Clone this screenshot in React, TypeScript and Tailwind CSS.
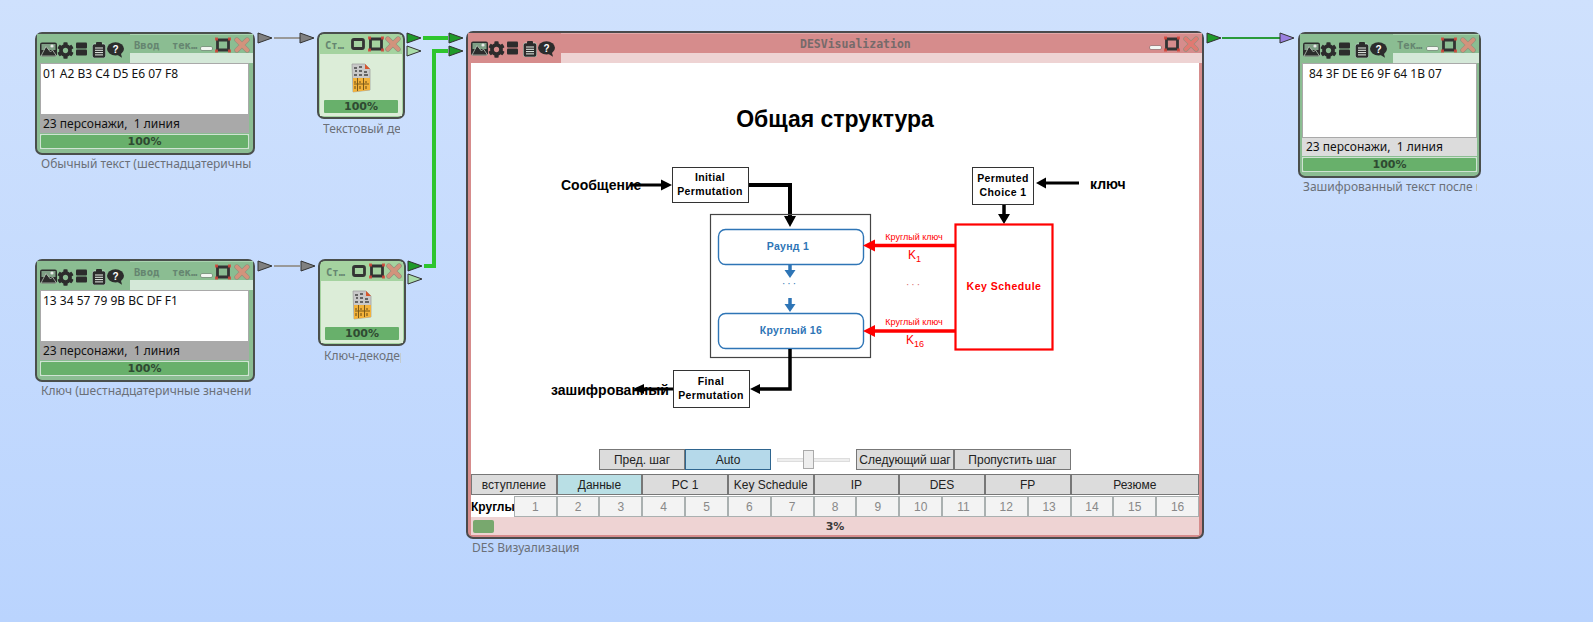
import React from "react";
import { FaCog } from "react-icons/fa";

const Tri = ({ x, cy, fill, w = 14, h = 10 }: { x: number; cy: number; fill: string; w?: number; h?: number }) => (
  <polygon points={`${x},${cy - h / 2} ${x + w},${cy} ${x},${cy + h / 2}`} fill={fill} stroke="#333" strokeWidth="1" />
);

const ImageIcon = () => (
  <svg width="17" height="15" viewBox="0 0 17 15" className="shrink-0">
    <rect x="0" y="0.5" width="17" height="14" rx="2" fill="#2c2c2c" />
    <rect x="1.5" y="2" width="14" height="6" fill="#7f9f85" />
    <circle cx="12" cy="4" r="1.6" fill="#e8e8e8" />
    <path d="M1 14 L6 4.5 L10.5 10 L12.5 8 L16.5 14 Z" fill="#2c2c2c" stroke="#c8d8c8" strokeWidth="0.7" />
  </svg>
);
const StackIcon = () => (
  <svg width="11" height="14" viewBox="0 0 11 14" className="shrink-0">
    <rect x="0" y="0.5" width="11" height="6" rx="1" fill="#2c2c2c" />
    <rect x="0" y="7.5" width="11" height="6" rx="1" fill="#2c2c2c" />
  </svg>
);
const ClipIcon = () => (
  <svg width="14" height="16" viewBox="0 0 14 16" className="shrink-0">
    <rect x="0.3" y="2" width="13.4" height="14" rx="2" fill="#2c2c2c" stroke="#dfe" strokeWidth="0.5" />
    <rect x="4" y="0" width="6" height="3.5" rx="1" fill="#2c2c2c" />
    <path d="M3 6h8M3 8.3h8M3 10.6h8M3 12.9h8" stroke="#e8efe8" strokeWidth="1" />
  </svg>
);
const BubbleIcon = () => (
  <svg width="17" height="16" viewBox="0 0 17 16" className="shrink-0">
    <ellipse cx="8.5" cy="6.8" rx="8.5" ry="6.6" fill="#2c2c2c" />
    <path d="M9 12 L15 15.8 L13.5 10 Z" fill="#2c2c2c" />
    <text x="8.5" y="10.5" textAnchor="middle" fontSize="10" fontWeight="700" fill="#fff" fontFamily="'Liberation Sans', sans-serif">?</text>
  </svg>
);
const Toolbar = () => (
  <div className="flex items-start pl-[3px] pt-[8px] text-[#2c2c2c]">
    <ImageIcon />
    <FaCog size={17} className="shrink-0" />
    <div className="ml-[2px]">
      <StackIcon />
    </div>
    <div className="ml-[5px]">
      <ClipIcon />
    </div>
    <div className="ml-[1px]">
      <BubbleIcon />
    </div>
  </div>
);

const MinIcon = () => <div className="mt-[10px] h-[3px] w-[11px] shrink-0 rounded-[1px] bg-[#f2f6f2] shadow-[0_0_0_0.5px_#777]" />;
const StopIcon = () => (
  <svg width="14" height="16" viewBox="0 0 14 16" className="shrink-0">
    <rect x="1.5" y="3.5" width="11" height="9" rx="1.5" fill="none" stroke="#333" strokeWidth="2.8" />
  </svg>
);
const ExpandIcon = () => (
  <svg width="16" height="16" viewBox="0 0 16 16" className="shrink-0">
    <path d="M2.5 3 H13.5 V13 H2.5 Z" fill="none" stroke="#333" strokeWidth="2.8" />
    <rect x="0" y="0.5" width="3" height="3" fill="#d6453a" opacity="0.85" />
    <rect x="13" y="0.5" width="3" height="3" fill="#d6453a" opacity="0.85" />
    <rect x="0" y="12.5" width="3" height="3" fill="#d6453a" opacity="0.85" />
    <rect x="13" y="12.5" width="3" height="3" fill="#d6453a" opacity="0.85" />
  </svg>
);
const CloseIcon = ({ color }: { color: string }) => (
  <svg width="16" height="16" viewBox="0 0 16 16" className="shrink-0">
    <path d="M2.8 2.8 L13.2 13.2 M13.2 2.8 L2.8 13.2" stroke="#8f8f7c" strokeWidth="5" strokeLinecap="round" />
    <path d="M2.8 2.8 L13.2 13.2 M13.2 2.8 L2.8 13.2" stroke={color} strokeWidth="3.8" strokeLinecap="round" />
  </svg>
);

const FileIcon = () => (
  <svg width="20" height="30" viewBox="0 0 20 30">
    <path d="M1 1 L14 1 L19 6 L19 27 L2 29 Z" fill="#c9c9c9" stroke="#9a9a9a" strokeWidth="0.7" />
    <path d="M14 1 L19 6 L14 6 Z" fill="#d9572b" />
    <path d="M2 15 L19 15 L19 27 L2 29 Z" fill="#f3b23a" />
    <path d="M3 5h3M8 4h3M4 8h2M8 8h3M13 9h3M3 12h3M8 12h3M13 12h4" stroke="#444" strokeWidth="1.3" />
    <path d="M6.5 15v13M12.5 15v12M3 21h15" stroke="#7a5a1a" strokeWidth="1" />
    <path d="M4 18v2M9 18v2M15 18v2M4 23v3M9 23v3M15 23v3" stroke="#6a4a10" strokeWidth="1" />
  </svg>
);

const Progress = () => (
  <div className="flex h-[13px] items-center justify-center rounded-[1px] bg-[#68b06b] font-['DejaVu_Sans',sans-serif] text-[11px] font-bold leading-none text-[#2f4a32]">
    100%
  </div>
);

const Label = ({ text, className }: { text: string; className: string }) => (
  <div className={`overflow-hidden whitespace-nowrap font-['Noto_Sans',sans-serif] text-[12px] leading-[16px] text-[#6b7078] ${className}`}>{text}</div>
);

const titleCls = "whitespace-pre pl-[4px] pt-[2px] font-['DejaVu_Sans_Mono',monospace] text-[10.5px] font-bold leading-[16px] text-[#658570]";

const InputNode = ({
  title,
  value,
  areaH,
  statusBg,
  bodyPad,
  valuePad,
  statusPad,
}: {
  title: string;
  value: string;
  areaH: string;
  statusBg: string;
  bodyPad: string;
  valuePad: string;
  statusPad: string;
}) => (
  <div className="flex flex-col rounded-[7px] border-2 border-[#4a4f4c] bg-[#8bbd92] pb-[4px]">
    <div className="flex h-[29px]">
      <div className="w-[93px] shrink-0 rounded-br-[14px] bg-[#8bbd92]">
        <Toolbar />
      </div>
      <div className="flex min-w-0 flex-1 flex-col">
        <div className="flex h-[19px] items-start justify-between border-t border-[#a9d3af] bg-[#8bbd92] pr-[3px]">
          <span className={titleCls}>{title}</span>
          <div className="flex gap-[3px] pt-[2px]">
            <MinIcon />
            <ExpandIcon />
            <CloseIcon color="#d2937c" />
          </div>
        </div>
        <div className="flex-1 bg-[#d4e8d8]" />
      </div>
    </div>
    <div className={`flex flex-col ${bodyPad}`}>
      <div className={`${areaH} border border-[#a9a9a9] bg-white ${valuePad} font-['Noto_Sans',sans-serif] text-[12px] leading-[20px] text-[#111]`}>{value}</div>
      <div className={`h-[18px] ${statusBg} ${statusPad} font-['Noto_Sans',sans-serif] text-[12px] leading-[18px] text-[#111]`}>23 персонажи,&nbsp; 1 линия</div>
      <div className="mt-[1px] bg-[#cfe3d2] p-[1px]">
        <Progress />
      </div>
    </div>
  </div>
);

const SmallNode = ({ pos, label }: { pos: string; label: string }) => (
  <div className={`absolute w-[88px] ${pos}`}>
    <div className="rounded-[7px] border-2 border-[#4a4f4c] bg-[#a5d3a0] p-[1px]">
      <div className="flex h-[19px] items-start justify-between bg-[#a5d3a0] pl-[5px] pr-[1px] pt-[1px]">
        <span className="pt-[1px] font-['DejaVu_Sans_Mono',monospace] text-[10.5px] font-bold leading-[16px] text-[#658570]">Ст…</span>
        <div className="flex gap-[1px]">
          <div className="mr-[2px]">
            <StopIcon />
          </div>
          <ExpandIcon />
          <CloseIcon color="#d2937c" />
        </div>
      </div>
      <div className="flex h-[62px] flex-col bg-[#dcedd8] px-[4px] pb-[3px]">
        <div className="flex flex-1 items-center justify-center pt-[2px]">
          <FileIcon />
        </div>
        <Progress />
      </div>
    </div>
    <Label text={label} className="ml-[6px] mt-[2px] w-[77px]" />
  </div>
);

const Arrow = ({ d, head, color = "#000", w = 3 }: { d: string; head: string; color?: string; w?: number }) => (
  <g>
    <path d={d} fill="none" stroke={color} strokeWidth={w} />
    <polygon points={head} fill={color} />
  </g>
);

const diagramFont = "'Liberation Sans', Arial, sans-serif";

const Diagram = () => (
  <svg width="728" height="386" viewBox="471 63 728 386" className="block">
    <g fontFamily={diagramFont}>
      <text x="835" y="127" textAnchor="middle" fontSize="23" fontWeight="700" fill="#000">Общая структура</text>

      <text x="561" y="190" fontSize="14" fontWeight="700" fill="#000">Сообщение</text>
      <Arrow d="M630 185 H664" head="672,185 661,179.5 661,190.5" />
      <rect x="672.5" y="167.5" width="76" height="35" fill="#fff" stroke="#333" strokeWidth="1" />
      <text x="710" y="181" textAnchor="middle" fontSize="10.5" fontWeight="700" letterSpacing="0.4">Initial</text>
      <text x="710" y="195" textAnchor="middle" fontSize="10.5" fontWeight="700" letterSpacing="0.4">Permutation</text>
      <Arrow d="M749 185 H790 V218" head="790,227 784,216 796,216" w={4} />

      <rect x="710.5" y="214.5" width="160" height="143" fill="none" stroke="#444" strokeWidth="1.2" />
      <rect x="718.5" y="229.5" width="145" height="35" rx="7" fill="#fff" stroke="#2e75b6" strokeWidth="1.4" />
      <text x="788" y="250" textAnchor="middle" fontSize="10.5" fontWeight="700" fill="#2e75b6" letterSpacing="0.3">Раунд 1</text>
      <Arrow d="M790 265 V272" head="790,278 784.5,270 795.5,270" color="#2e75b6" w={3.5} />
      <text x="790" y="287" textAnchor="middle" fontSize="10" fill="#2e75b6" letterSpacing="2">···</text>
      <Arrow d="M790 298 V306" head="790,312 784.5,304 795.5,304" color="#2e75b6" w={3.5} />
      <rect x="718.5" y="313.5" width="145" height="35" rx="7" fill="#fff" stroke="#2e75b6" strokeWidth="1.4" />
      <text x="791" y="334" textAnchor="middle" fontSize="10.5" fontWeight="700" fill="#2e75b6" letterSpacing="0.3">Круглый 16</text>

      <Arrow d="M790 349 V389 H758" head="750,389 760,384 760,394" w={3.5} />
      <rect x="673.5" y="370.5" width="76" height="37" fill="#fff" stroke="#333" strokeWidth="1" />
      <text x="711" y="385" textAnchor="middle" fontSize="10.5" fontWeight="700" letterSpacing="0.4">Final</text>
      <text x="711" y="399" textAnchor="middle" fontSize="10.5" fontWeight="700" letterSpacing="0.4">Permutation</text>
      <Arrow d="M673 389 H642" head="633,389 644,384 644,394" />
      <text x="551" y="395" fontSize="14" fontWeight="700" fill="#000">зашифрованный</text>

      <rect x="972.5" y="167.5" width="61" height="37" fill="#fff" stroke="#333" strokeWidth="1" />
      <text x="1003" y="182" textAnchor="middle" fontSize="10.5" fontWeight="700" letterSpacing="0.4">Permuted</text>
      <text x="1003" y="196" textAnchor="middle" fontSize="10.5" fontWeight="700" letterSpacing="0.4">Choice 1</text>
      <Arrow d="M1079 183 H1044" head="1036,183 1046,177.5 1046,188.5" />
      <text x="1090" y="189" fontSize="14" fontWeight="700" fill="#000">ключ</text>
      <Arrow d="M1004 205 V216" head="1004,224 998,214 1010,214" w={3.5} />

      <rect x="955.5" y="224.5" width="97" height="125" fill="#fff" stroke="#ff0000" strokeWidth="2.2" />
      <text x="1004" y="290" textAnchor="middle" fontSize="10.5" fontWeight="700" fill="#ff0000" letterSpacing="0.5">Key Schedule</text>

      <Arrow d="M955 245.5 H872" head="863,245.5 875,239.5 875,251.5" color="#ff0000" w={3.5} />
      <Arrow d="M955 331 H872" head="863,331 875,325 875,337" color="#ff0000" w={3.5} />
      <text x="914" y="240" textAnchor="middle" fontSize="9" fill="#ff0000">Круглый ключ</text>
      <text x="908" y="259" fontSize="12" fill="#ff0000">K<tspan fontSize="9" dy="3">1</tspan></text>
      <text x="914" y="288" textAnchor="middle" fontSize="10" fill="#d86a6a" letterSpacing="2">···</text>
      <text x="914" y="325" textAnchor="middle" fontSize="9" fill="#ff0000">Круглый ключ</text>
      <text x="906" y="344" fontSize="12" fill="#ff0000">K<tspan fontSize="9" dy="3">16</tspan></text>
    </g>
  </svg>
);

const btn = "flex h-[21px] items-center justify-center whitespace-nowrap border border-[#777] bg-[#dcdcdc] text-[12px] text-[#222]";
const tab = "col-span-2 flex h-[21px] items-center justify-center border border-[#777] bg-[#dcdcdc] text-[12px] text-[#222]";
const cell = "flex h-[21px] items-center justify-center border border-[#aab0b0] bg-[#f3f3f3] text-[12px] text-[#888]";

const Controls = () => (
  <div className="font-['Liberation_Sans',sans-serif]">
    <div className="flex items-center justify-center">
      <div className={`${btn} w-[86px]`}>Пред. шаг</div>
      <div className="flex h-[21px] w-[86px] items-center justify-center border border-[#2f6690] bg-[#b5d9ea] text-[12px] text-[#222]">Auto</div>
      <div className="relative mx-[6px] flex h-[21px] w-[73px] items-center">
        <div className="h-[4px] w-full border border-[#ddd] bg-[#eee]" />
        <div className="absolute left-[26px] top-[1px] h-[19px] w-[11px] border border-[#aaa] bg-[#eee]" />
      </div>
      <div className={`${btn} w-[98px]`}>Следующий шаг</div>
      <div className={`${btn} w-[117px]`}>Пропустить шаг</div>
    </div>
    <div className="mt-[4px] grid grid-cols-[repeat(17,minmax(0,1fr))] gap-y-[1px]">
      <div className={tab}>вступление</div>
      <div className="col-span-2 flex h-[21px] items-center justify-center border border-[#777] bg-[#b9dfe5] text-[12px] text-[#222]">Данные</div>
      <div className={tab}>PC 1</div>
      <div className={tab}>Key Schedule</div>
      <div className={tab}>IP</div>
      <div className={tab}>DES</div>
      <div className={tab}>FP</div>
      <div className="col-span-3 flex h-[21px] items-center justify-center border border-[#777] bg-[#dcdcdc] text-[12px] text-[#222]">Резюме</div>
      <div className="flex h-[21px] items-center whitespace-nowrap bg-white text-[12px] font-bold text-black">Круглы</div>
      {Array.from({ length: 16 }, (_, i) => (
        <div key={i} className={cell}>{i + 1}</div>
      ))}
    </div>
  </div>
);

const MainNode = () => (
  <div className="absolute left-[466px] top-[31px] w-[738px]">
    <div className="rounded-[7px] border-2 border-[#4a4a4c] bg-[#d68c8c] pb-[2px]">
      <div className="flex h-[30px]">
        <div className="w-[93px] shrink-0 rounded-br-[14px] bg-[#d68c8c]">
          <Toolbar />
        </div>
        <div className="flex min-w-0 flex-1 flex-col">
          <div className="flex h-[20px] items-start justify-between border-t border-[#e2a9a9] bg-[#d68c8c] pr-[3px]">
            <span className="ml-[239px] pt-[2px] font-['DejaVu_Sans_Mono',monospace] text-[11.5px] font-bold leading-[16px] text-[#756a6a]">DESVisualization</span>
            <div className="flex gap-[3px] pt-[2px]">
              <MinIcon />
              <ExpandIcon />
              <CloseIcon color="#e07a72" />
            </div>
          </div>
          <div className="flex-1 bg-[#eed3d3]" />
        </div>
      </div>
      <div className="mx-[3px] bg-[#eed3d3]">
        <div className="bg-white">
          <Diagram />
          <Controls />
        </div>
        <div className="flex h-[18px] items-center">
          <div className="ml-[2px] h-[13px] w-[21px] rounded-[2px] bg-[#78a86e]" />
          <div className="flex-1 pr-[23px] text-center font-['DejaVu_Sans',sans-serif] text-[11px] font-bold leading-none text-[#3a3a3a]">3%</div>
        </div>
      </div>
    </div>
    <Label text="DES Визуализация" className="ml-[6px] mt-[1px]" />
  </div>
);

export default function App() {
  return (
    <div className="relative h-screen w-full overflow-hidden bg-gradient-to-b from-[#cfe1fd] to-[#bad4fe]">
      <svg width="1593" height="622" className="pointer-events-none absolute left-0 top-0">
        <Tri x={258} cy={38} fill="#808080" />
        <path d="M274 38 H300" stroke="#999" strokeWidth="2" />
        <Tri x={300} cy={38} fill="#808080" />
        <Tri x={258} cy={266} fill="#808080" />
        <path d="M274 266 H300" stroke="#999" strokeWidth="2" />
        <Tri x={301} cy={266} fill="#808080" />
        <Tri x={407} cy={38} fill="#1f9a2a" />
        <Tri x={407} cy={51} fill="#a8dca8" />
        <path d="M423 38 H448" stroke="#2ec52e" strokeWidth="4" />
        <Tri x={449} cy={38} fill="#1f9a2a" />
        <Tri x={408} cy={266} fill="#1f9a2a" />
        <Tri x={408} cy={279} fill="#a8dca8" />
        <path d="M424 266 H434 V51 H448" stroke="#2ec52e" strokeWidth="4" fill="none" />
        <Tri x={449} cy={51} fill="#1f9a2a" />
        <Tri x={1207} cy={38} fill="#1f9a2a" />
        <path d="M1222 38 H1280" stroke="#2a9a3a" strokeWidth="2" />
        <Tri x={1280} cy={38} fill="#9b80e0" />
      </svg>

      <div className="absolute left-[35px] top-[32px] w-[220px]">
        <InputNode title="Ввод  тек…" value="01 A2 B3 C4 D5 E6 07 F8" areaH="h-[52px]" statusBg="bg-[#a9a9a9]" bodyPad="pl-[3px] pr-[4px]" valuePad="px-[2px]" statusPad="pl-[3px]" />
        <Label text="Обычный текст (шестнадцатеричные значения)" className="ml-[6px] mt-[1px] w-[210px]" />
      </div>
      <div className="absolute left-[35px] top-[259px] w-[220px]">
        <InputNode title="Ввод  тек…" value="13 34 57 79 9B BC DF F1" areaH="h-[52px]" statusBg="bg-[#a9a9a9]" bodyPad="pl-[3px] pr-[4px]" valuePad="px-[2px]" statusPad="pl-[3px]" />
        <Label text="Ключ (шестнадцатеричные значения)" className="ml-[6px] mt-[1px] w-[210px]" />
      </div>
      <SmallNode pos="left-[317px] top-[32px]" label="Текстовый декодер" />
      <SmallNode pos="left-[318px] top-[259px]" label="Ключ-декодер" />
      <MainNode />
      <div className="absolute left-[1298px] top-[32px] w-[183px]">
        <InputNode title="Тек…" value="84 3F DE E6 9F 64 1B 07" areaH="h-[75px]" statusBg="bg-[#dcdcdc]" bodyPad="px-[2px]" valuePad="px-[6px]" statusPad="pl-[4px]" />
        <Label text="Зашифрованный текст после применения" className="ml-[5px] mt-[1px] w-[174px]" />
      </div>
    </div>
  );
}
